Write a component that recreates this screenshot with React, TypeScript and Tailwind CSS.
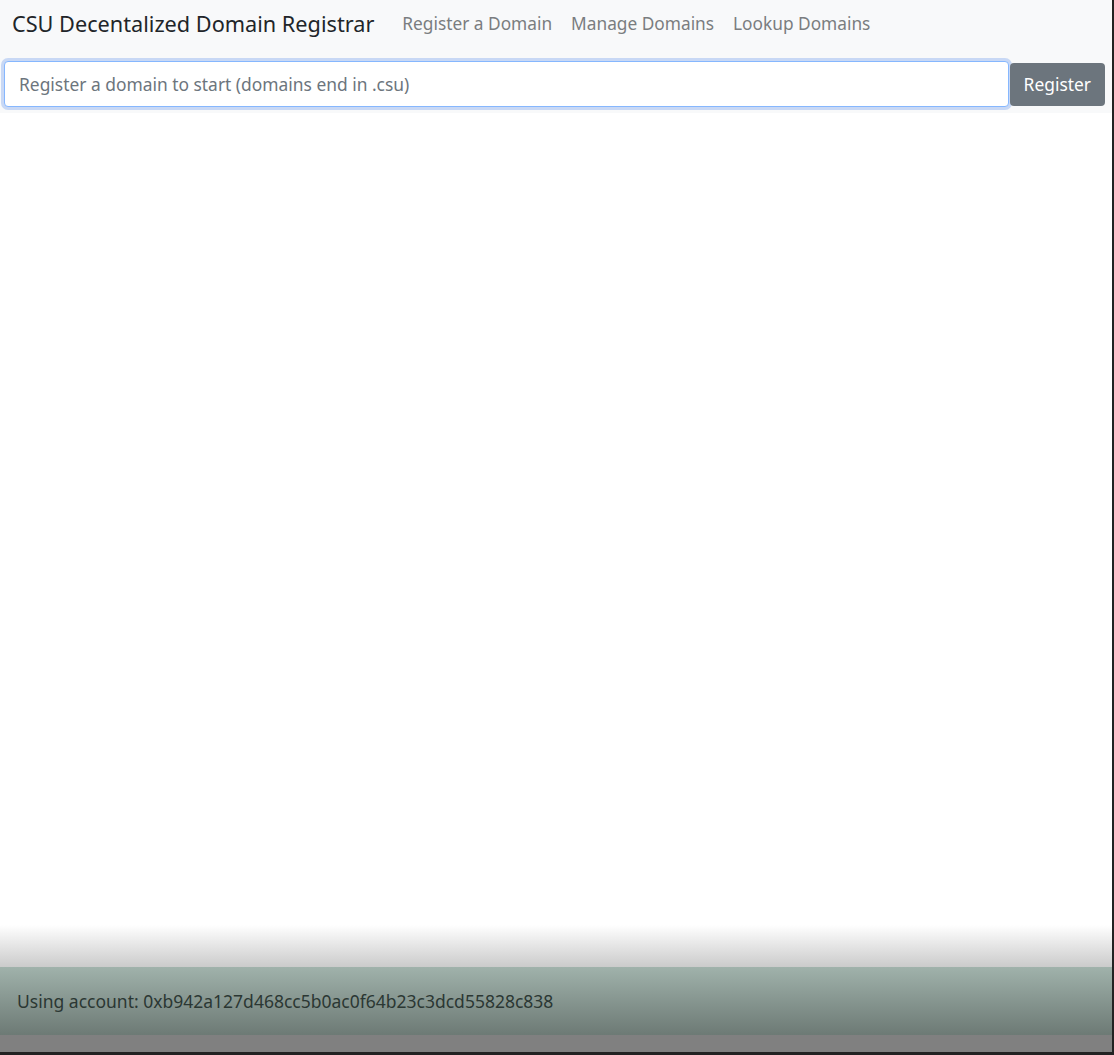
export default function App() {
  const font = { fontFamily: '"Noto Sans", "Open Sans", sans-serif' };
  const links: string[] = ["Register a Domain", "Manage Domains", "Lookup Domains"];

  return (
    <div
      className="h-[1055px] w-[1114px] flex flex-col bg-white border-r-2 border-[#222] overflow-hidden"
      style={font}
    >
      <nav className="h-[48px] bg-[#f8f9fa] flex items-center pl-[12px]">
        <span className="text-[21.7px] text-[#212529] mr-[28px]">
          CSU Decentalized Domain Registrar
        </span>
        <div className="flex gap-[19px]">
          {links.map((l) => (
            <a key={l} className="text-[17.3px] text-[#7a7d80]">
              {l}
            </a>
          ))}
        </div>
      </nav>

      <div className="flex items-center pl-[4px] pr-[7px] pt-[13px] pb-[6px] bg-[#f8f9fa]">
        <input
          className="flex-1 h-[46px] rounded-[4px] bg-white border border-[#86b7fe] shadow-[0_0_0_3px_rgba(160,190,240,0.55)] px-[14px] text-[17.4px] outline-none placeholder:text-[#6c757d]"
          placeholder="Register a domain to start (domains end in .csu)"
        />
        <button className="h-[43px] px-[14px] ml-[1px] rounded-[4px] bg-[#6c757d] text-white text-[17.4px]">
          Register
        </button>
      </div>

      <main className="flex-1" />

      <div className="h-[42px] bg-gradient-to-b from-white to-[#cbcbcb]" />
      <footer className="h-[68px] flex items-center pl-[17px] bg-gradient-to-b from-[#a0b2ab] to-[#6d7a75]">
        <span className="text-[17.5px] text-[#2b3733]">
          Using account: 0xb942a127d468cc5b0ac0f64b23c3dcd55828c838
        </span>
      </footer>
      <div className="h-[17px] bg-[#808080]" />
      <div className="h-[3px] bg-[#222]" />
    </div>
  );
}
